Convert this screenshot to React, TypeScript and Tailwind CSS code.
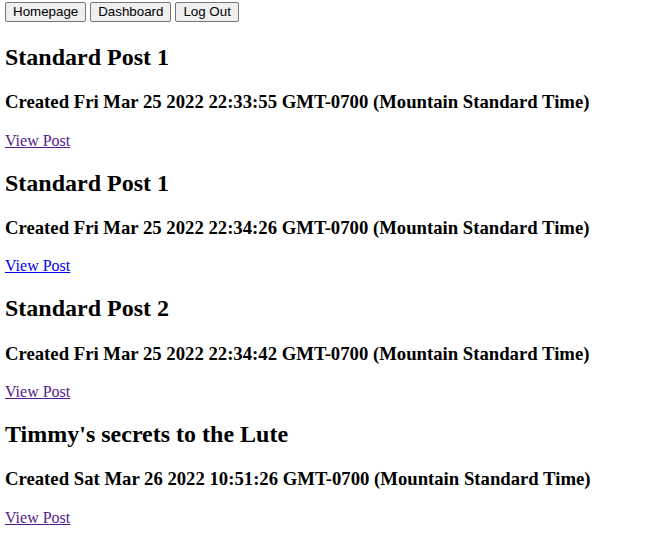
import React from 'react';

interface Post {
    id: number;
    title: string;
    created: string;
    visited: boolean;
}

const posts: Post[] = [
    { id: 1, title: 'Standard Post 1', created: 'Fri Mar 25 2022 22:33:55 GMT-0700 (Mountain Standard Time)', visited: true },
    { id: 2, title: 'Standard Post 1', created: 'Fri Mar 25 2022 22:34:26 GMT-0700 (Mountain Standard Time)', visited: false },
    { id: 3, title: 'Standard Post 2', created: 'Fri Mar 25 2022 22:34:42 GMT-0700 (Mountain Standard Time)', visited: true },
    { id: 4, title: "Timmy's secrets to the Lute", created: 'Sat Mar 26 2022 10:51:26 GMT-0700 (Mountain Standard Time)', visited: true },
];

const NavButton: React.FC<{ label: string }> = ({ label }) => (
    <button className="h-[20px] px-[7px] py-[1px] bg-[#efefef] border border-[#767676] rounded-[2px] text-[13.33px] leading-[16px] text-black font-['Liberation_Sans',Arial,sans-serif]">
        {label}
    </button>
);

const App: React.FC = () => {
    return (
        <div className="min-h-[555px] bg-white text-black pl-[5px] pt-[2px] font-['Liberation_Serif','Times_New_Roman',serif]">
            <nav className="flex gap-[4px] h-[22px]">
                <NavButton label="Homepage" />
                <NavButton label="Dashboard" />
                <NavButton label="Log Out" />
            </nav>
            {posts.map(post => (
                <div key={post.id} className="text-[16px] leading-[18px]">
                    <h2 className="text-[24px] font-bold leading-[27.6px] my-[19.92px]">{post.title}</h2>
                    <h3 className="text-[18.72px] font-bold leading-[21.5px] my-[18.72px]">Created {post.created}</h3>
                    <a
                        href="#"
                        className={`underline ${post.visited ? 'text-[#551a8b]' : 'text-[#0000ee]'}`}
                    >
                        View Post
                    </a>
                </div>
            ))}
        </div>
    );
};

export default App;
